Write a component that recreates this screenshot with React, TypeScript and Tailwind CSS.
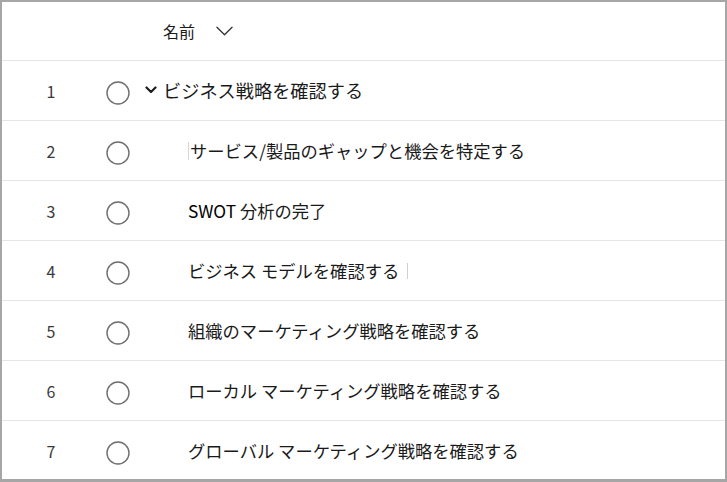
import { ReactNode } from "react";

type Task = {
  id: number;
  title: ReactNode;
  parent?: boolean;
  caret?: "before" | "after";
};

const tasks: Task[] = [
  { id: 1, title: "ビジネス戦略を確認する", parent: true },
  { id: 2, title: "サービス/製品のギャップと機会を特定する", caret: "before" },
  {
    id: 3,
    title: (
      <>
        <span className="text-black">SWOT</span> 分析の完了
      </>
    ),
  },
  { id: 4, title: "ビジネス モデルを確認する", caret: "after" },
  { id: 5, title: "組織のマーケティング戦略を確認する" },
  { id: 6, title: "ローカル マーケティング戦略を確認する" },
  { id: 7, title: "グローバル マーケティング戦略を確認する" },
];

function Chevron({ className }: { className?: string }) {
  return (
    <svg viewBox="0 0 18 10" className={className} fill="none">
      <path d="M1 1l8 8 8-8" stroke="currentColor" strokeWidth="1.4" strokeLinecap="round" strokeLinejoin="round" />
    </svg>
  );
}

function Circle() {
  return (
    <svg viewBox="0 0 24 24" className="h-[24px] w-[24px]">
      <circle cx="12" cy="12" r="11" fill="none" stroke="#6e6e6e" strokeWidth="1.4" />
    </svg>
  );
}

function TaskRow({ task }: { task: Task }) {
  return (
    <div className="flex h-[60px] items-center border-b border-[#e6e6e6] last:border-b-0">
      <div className="w-[98px] text-center text-[16px] text-[#3a3a3a]">{task.id}</div>
      <div className="flex w-[35px] justify-center pt-[4px]">
        <Circle />
      </div>
      {task.parent ? (
        <div className="flex items-center pl-[10px]">
          <svg viewBox="0 0 12 8" className="mr-[6px] h-[8px] w-[12px]" fill="none">
            <path d="M1.5 1.5l4.5 4.5 4.5-4.5" stroke="#1e1e1e" strokeWidth="2.2" strokeLinecap="round" strokeLinejoin="round" />
          </svg>
          <span className="text-[18.2px] text-[#1a1a1a]">{task.title}</span>
        </div>
      ) : (
        <div className="flex items-center pl-[53px] text-[17.3px] text-[#1a1a1a]">
          {task.caret === "before" && <span className="mr-[1px] h-[18px] w-px bg-[#d8d8d8]" />}
          <span>{task.title}</span>
          {task.caret === "after" && <span className="ml-[8px] h-[16px] w-px bg-[#d0d0d0]" />}
        </div>
      )}
    </div>
  );
}

export default function App() {
  return (
    <div
      className="h-[482px] w-[727px] border-2 border-b-[3px] border-[#a6a6a6] bg-white"
      style={{ fontFamily: '"Noto Sans CJK JP", "Noto Sans", sans-serif' }}
    >
      <div className="flex h-[59px] items-center border-b border-[#e6e6e6] pl-[161px]">
        <span className="text-[16px] text-[#1a1a1a]">名前</span>
        <Chevron className="ml-[21px] h-[10px] w-[17px] text-[#333]" />
      </div>
      {tasks.map((task) => (
        <TaskRow key={task.id} task={task} />
      ))}
    </div>
  );
}
